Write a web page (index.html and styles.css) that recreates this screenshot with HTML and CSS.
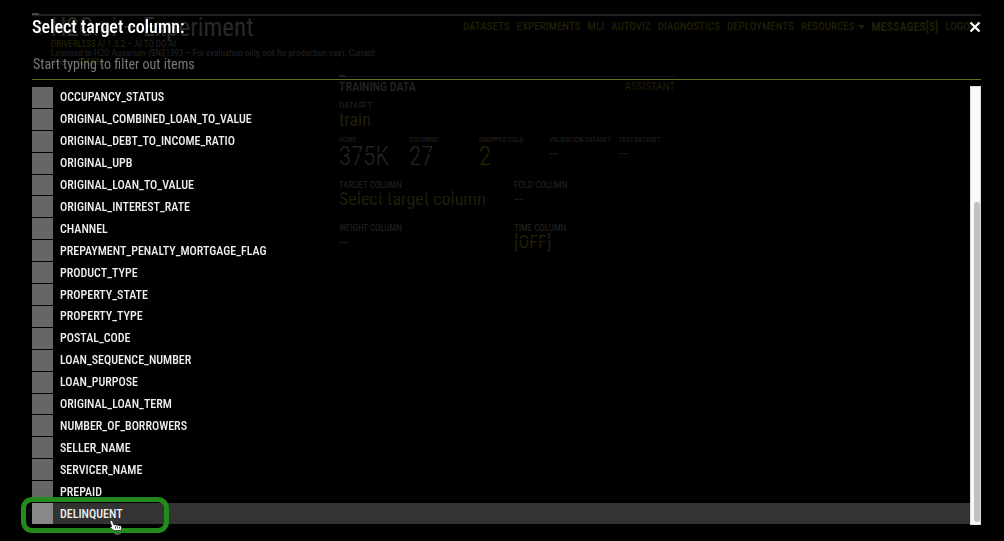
FILE: index.html
```
<!DOCTYPE html>
<html lang="en">
<head>
<meta charset="utf-8">
<title>Experiment</title>
<link rel="stylesheet" href="styles.css">
</head>
<body>
<div class="app" inert>
  <header class="header">
    <a class="back" href="#" aria-label="Back"><svg width="8" height="20" viewBox="0 0 8 20"><path d="M7 3 2 10l5 7" fill="none" stroke="currentColor" stroke-width="2"/></svg></a>
    <div class="brand">
      <h1 class="brand-title">H2O.ai – Experiment</h1>
      <p class="brand-line"><a class="accent" href="#">DRIVERLESS AI 1.5.2</a> – AI TO DO AI</p>
      <p class="brand-line">Licensed to H2O Aquarium (SN31393 – For evaluation only, not for production use). Current</p>
      <p class="brand-line">User – <a class="accent" href="#">ADMIN</a></p>
    </div>
    <nav class="nav">
      <a href="#">DATASETS</a>
      <a href="#">EXPERIMENTS</a>
      <a href="#">MLI</a>
      <a href="#">AUTOVIZ</a>
      <a href="#">DIAGNOSTICS</a>
      <a href="#">DEPLOYMENTS</a>
      <a class="nav-menu" href="#">RESOURCES<svg width="7" height="4" viewBox="0 0 7 4"><path d="M0 0h7L3.500 4z" fill="currentColor"/></svg></a>
      <a class="nav-strong" href="#">MESSAGES[5]</a>
      <a href="#">LOGOUT</a>
    </nav>
  </header>
  <section class="training">
    <div class="training-head"><h2 class="training-title">TRAINING DATA</h2><a class="assistant" href="#">ASSISTANT</a></div>
    <div class="field"><span class="label">DATASET</span><a class="value" href="#">train</a></div>
    <div class="stats">
      <div class="stat"><span class="stat-label">ROWS</span><span class="number">375K</span></div>
      <div class="stat"><span class="stat-label">COLUMNS</span><span class="number">27</span></div>
      <div class="stat"><span class="stat-label">DROPPED COLS</span><a class="number accent" href="#">2</a></div>
      <div class="stat"><span class="stat-label">VALIDATION DATASET</span><a class="value" href="#">--</a></div>
      <div class="stat"><span class="stat-label">TEST DATASET</span><a class="value" href="#">--</a></div>
    </div>
    <div class="fields">
      <div class="field"><span class="label">TARGET COLUMN</span><a class="value" href="#">Select target column</a></div>
      <div class="field"><span class="label">FOLD COLUMN</span><a class="value" href="#">--</a></div>
      <div class="field"><span class="label">WEIGHT COLUMN</span><a class="value" href="#">--</a></div>
      <div class="field"><span class="label">TIME COLUMN</span><a class="value" href="#">[OFF]</a></div>
    </div>
  </section>
</div>

<div class="dialog" role="dialog" aria-labelledby="dialog-title">
  <div class="dialog-head">
    <label class="dialog-title" id="dialog-title" for="filter">Select target column:</label>
    <button class="close" type="button" aria-label="Close"><svg width="12" height="12" viewBox="0 0 12 12"><path d="m1.500 1.500 9 9m0-9-9 9" fill="none" stroke="currentColor" stroke-width="2.200"/></svg></button>
  </div>
  <input class="filter" id="filter" type="text" placeholder="Start typing to filter out items">
  <div class="list-area">
    <div class="list">
      <button class="row" type="button"><span class="swatch"></span>OCCUPANCY_STATUS</button>
      <button class="row" type="button"><span class="swatch"></span>ORIGINAL_COMBINED_LOAN_TO_VALUE</button>
      <button class="row" type="button"><span class="swatch"></span>ORIGINAL_DEBT_TO_INCOME_RATIO</button>
      <button class="row" type="button"><span class="swatch"></span>ORIGINAL_UPB</button>
      <button class="row" type="button"><span class="swatch"></span>ORIGINAL_LOAN_TO_VALUE</button>
      <button class="row" type="button"><span class="swatch"></span>ORIGINAL_INTEREST_RATE</button>
      <button class="row" type="button"><span class="swatch"></span>CHANNEL</button>
      <button class="row" type="button"><span class="swatch"></span>PREPAYMENT_PENALTY_MORTGAGE_FLAG</button>
      <button class="row" type="button"><span class="swatch"></span>PRODUCT_TYPE</button>
      <button class="row" type="button"><span class="swatch"></span>PROPERTY_STATE</button>
      <button class="row" type="button"><span class="swatch"></span>PROPERTY_TYPE</button>
      <button class="row" type="button"><span class="swatch"></span>POSTAL_CODE</button>
      <button class="row" type="button"><span class="swatch"></span>LOAN_SEQUENCE_NUMBER</button>
      <button class="row" type="button"><span class="swatch"></span>LOAN_PURPOSE</button>
      <button class="row" type="button"><span class="swatch"></span>ORIGINAL_LOAN_TERM</button>
      <button class="row" type="button"><span class="swatch"></span>NUMBER_OF_BORROWERS</button>
      <button class="row" type="button"><span class="swatch"></span>SELLER_NAME</button>
      <button class="row" type="button"><span class="swatch"></span>SERVICER_NAME</button>
      <button class="row" type="button"><span class="swatch"></span>PREPAID</button>
      <button class="row row-active" type="button"><span class="swatch"></span>DELINQUENT<span class="ring"></span>
        <svg class="pointer" width="14" height="16" viewBox="0 0 14 16"><path d="M1.500.5q1.500-.5 2 1L5 5l1.500-.5 1 1L9 5l1 1 1.500-.5 1 1.500v3.500H5L1 7.500 2 6.500l1 .5-2-5z" fill="#fff" stroke="#111" stroke-width=".6"/><path d="M6.500 6v2.500M8.500 6.500v2M10.500 7v1.500" stroke="#333" stroke-width=".8"/><path d="M5 13h7l-.5 1.500H9L8 15.500 7 14.500H5.500z" fill="#555"/></svg>
      </button>
    </div>
    <div class="scrollbar"><span class="thumb"></span></div>
  </div>
</div>
</body>
</html>
```
FILE: styles.css
```
* { box-sizing: border-box; }
body {
  margin: 0;
  min-height: 100vh;
  background: #000;
  color: #242424;
  font-family: "Roboto Condensed", Roboto, "Liberation Sans Narrow", sans-serif;
  overflow: hidden;
}
h1, h2, p { margin: 0; font-weight: 400; }
a { color: #1e1f06; text-decoration: none; }
button, input { font: inherit; border: 0; padding: 0; background: none; }

.app { padding: 14px 23px 0 32px; }
.header {
  position: relative;
  display: flex;
  height: 62px;
  border-top: 2px solid #202020;
}
.header::before, .training-head::before {
  content: "";
  position: absolute;
  top: -3px;
  left: 0;
  width: 7px;
  height: 2px;
  background: #444;
}
.back { width: 19px; padding: 2px 0 0 3px; }
.brand { flex: 1; min-width: 0; white-space: nowrap; }
.brand-title { margin-bottom: 1px; font-size: 25px; line-height: 23px; color: #292929; }
.brand-line { font-size: 9px; line-height: 9px; }
.accent { color: #262700; }
.nav {
  display: flex;
  align-items: flex-start;
  gap: 7px;
  padding-top: 4px;
  margin-right: -1px;
  font-size: 11px;
  font-weight: 500;
  line-height: 14px;
}
.nav-menu { display: flex; align-items: center; gap: 3px; }
.nav-strong { font-size: 12px; font-weight: 700; }

.training { width: 336px; margin-left: 307px; }
.training-head {
  position: relative;
  display: flex;
  justify-content: space-between;
  margin-bottom: 7px;
  padding-top: 3px;
  border-top: 1px solid #111;
  font-size: 11px;
  line-height: 14px;
}
.training-head::before { top: -2px; width: 6px; background: #222; }
.training-title { font-size: 12px; font-weight: 500; }
.field { display: flex; flex-direction: column; }
.label { font-size: 9px; line-height: 10px; }
.value { font-size: 18px; line-height: 18px; }
.stats { display: grid; grid-template-columns: repeat(5, 70px); margin: 7px 0 10px; }
.stat { display: flex; flex-direction: column; white-space: nowrap; }
.stat-label { font-size: 7px; line-height: 8px; }
.number { font-size: 25px; font-weight: 300; line-height: 26px; }
.fields { display: grid; grid-template-columns: 175px 1fr; row-gap: 15px; }

.dialog {
  position: fixed;
  inset: 0;
  display: flex;
  flex-direction: column;
  padding: 17px 23px 16px 32px;
  color: #fff;
}
.dialog-head { display: flex; justify-content: space-between; align-items: center; }
.dialog-title { font-size: 18px; font-weight: 500; line-height: 20px; }
.close { width: 12px; height: 12px; color: #fff; display: flex; }
.filter {
  height: 43px;
  padding: 12px 0 0 1px;
  border-bottom: 1px solid #6a6e10;
  color: #777;
  font-size: 14px;
  outline: 0;
}
.filter::placeholder { color: #777; opacity: 1; }
.list-area { flex: 1; display: flex; min-height: 0; padding-top: 6px; }
.list { flex: 1; display: grid; grid-auto-rows: 1fr; padding-top: 1px; }
.row {
  position: relative;
  display: flex;
  align-items: center;
  gap: 7px;
  min-height: 0;
  border-bottom: 1px solid #000;
  color: #eee;
  font-size: 12px;
  font-weight: 500;
  line-height: 16px;
  text-align: left;
}
.swatch { width: 21px; height: 100%; background: #666; }
.row-active { background: #333; }
.row-active .swatch { background: #888; }
.ring {
  position: absolute;
  left: -11px;
  top: -6px;
  width: 148px;
  height: 36px;
  border: 5px solid #228b1b;
  border-radius: 11px;
}
.pointer { position: absolute; left: 77px; top: 17px; }
.scrollbar {
  width: 11px;
  display: flex;
  flex-direction: column;
  justify-content: flex-end;
  padding: 2px;
  background: #f9f9f9;
  border: 1px solid #ddd;
}
.thumb { height: 74%; margin-left: 1px; width: 6px; border-radius: 3px; background: #c1c1c1; }
```
